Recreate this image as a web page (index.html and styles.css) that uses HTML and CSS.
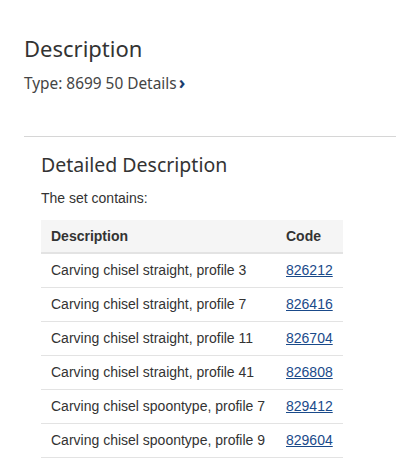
FILE: index.html
```html
<!DOCTYPE html>
<html lang="en">
<head>
    <meta charset="UTF-8">
    <meta name="viewport" content="width=device-width, initial-scale=1.0">
    <title>Description</title>
    <link rel="stylesheet" href="styles.css">
</head>
<body>
    <div class="section">
        <h2 class="title">Description</h2>
        <p class="type">Type: 8699 50 <a href="#" class="details">Details<span class="chevron">&rsaquo;</span></a></p>
    </div>
    <div class="detail">
        <h3 class="subtitle">Detailed Description</h3>
        <p class="intro">The set contains:</p>
        <table class="set-table">
            <thead>
                <tr><th>Description</th><th>Code</th></tr>
            </thead>
            <tbody>
                <tr><td>Carving chisel straight, profile 3</td><td><a href="#">826212</a></td></tr>
                <tr><td>Carving chisel straight, profile 7</td><td><a href="#">826416</a></td></tr>
                <tr><td>Carving chisel straight, profile 11</td><td><a href="#">826704</a></td></tr>
                <tr><td>Carving chisel straight, profile 41</td><td><a href="#">826808</a></td></tr>
                <tr><td>Carving chisel spoontype, profile 7</td><td><a href="#">829412</a></td></tr>
                <tr><td>Carving chisel spoontype, profile 9</td><td><a href="#">829604</a></td></tr>
            </tbody>
        </table>
    </div>
</body>
</html>
```

FILE: styles.css
```css
* {
    margin: 0;
    padding: 0;
    box-sizing: border-box;
}
body {
    font-family: 'Noto Sans', sans-serif;
    background-color: #fff;
    color: #333;
    padding-left: 24px;
}
.section {
    padding-top: 33px;
    padding-bottom: 42px;
    border-bottom: 1px solid #d6d6d6;
}
.title {
    font-size: 22px;
    font-weight: 400;
    line-height: 30px;
    color: #333;
}
.type {
    font-size: 15.4px;
    line-height: 20px;
    margin-top: 9px;
    color: #444;
}
.details {
    color: #444;
    text-decoration: none;
}
.chevron {
    color: #1a3d6e;
    font-weight: 700;
    font-size: 18px;
    margin-left: 2px;
}
.detail {
    padding: 14px 0 0 17px;
}
.subtitle {
    font-size: 19.5px;
    font-weight: 400;
    line-height: 28px;
    color: #333;
}
.intro {
    font-family: 'Liberation Sans', Arial, sans-serif;
    font-size: 14px;
    line-height: 18px;
    margin-top: 10px;
}
.set-table {
    margin-top: 13px;
    width: 302px;
    border-collapse: collapse;
    font-family: 'Liberation Sans', Arial, sans-serif;
    font-size: 14px;
    color: #333;
}
.set-table th {
    background-color: #f5f5f5;
    text-align: left;
    font-weight: 700;
    padding: 0 10px;
    height: 33px;
    border-bottom: 2px solid #e3e3e3;
}
.set-table td {
    padding: 0 10px;
    height: 34px;
    border-bottom: 1px solid #e3e3e3;
}
.set-table td a {
    color: #1a4a8a;
}
```
